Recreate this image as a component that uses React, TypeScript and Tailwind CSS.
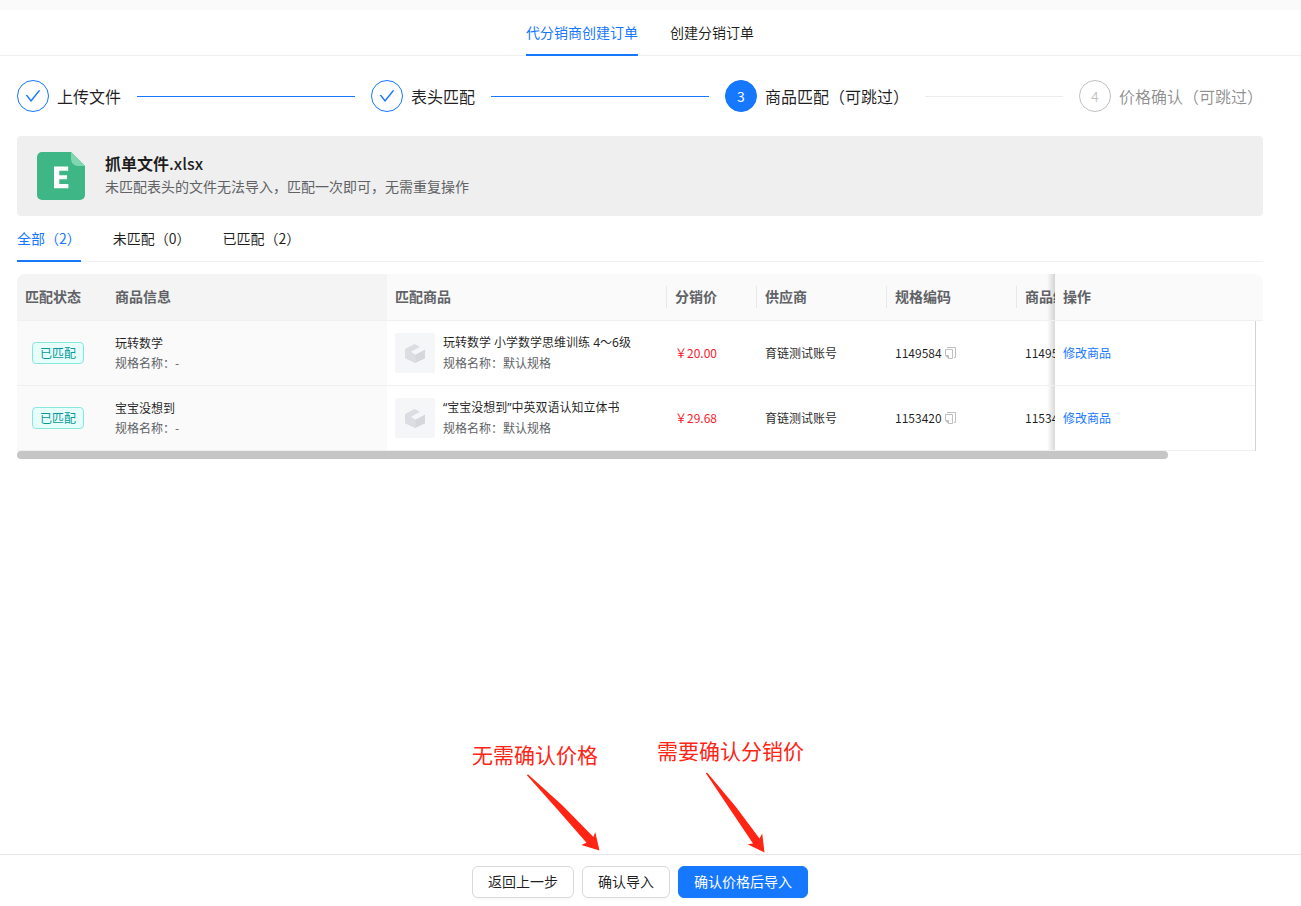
import React from 'react';

const FONT = "font-['Noto_Sans_CJK_SC',sans-serif]";

function CheckIcon() {
  return (
    <svg viewBox="64 64 896 896" className="size-4" fill="currentColor" aria-hidden="true">
      <path d="M912 190h-69.9c-9.8 0-19.1 4.5-25.1 12.2L404.7 724.5 207 474a32 32 0 00-25.1-12.2H112c-6.7 0-10.4 7.7-6.3 12.9l273.9 347c12.8 16.2 37.4 16.2 50.3 0l488.4-618.9c4.1-5.1.4-12.8-6.3-12.8z" />
    </svg>
  );
}

function FileIcon() {
  return (
    <svg viewBox="0 0 48 48" className="size-12 shrink-0" aria-hidden="true">
      <path d="M5 0H34L48 14V43a5 5 0 0 1-5 5H5a5 5 0 0 1-5-5V5a5 5 0 0 1 5-5Z" fill="#3eb686" />
      <path d="M34 0 48 14H41a7 7 0 0 1-7-7Z" fill="#7fd6b0" />
      <path d="M17 14.500H31.200V18.700H22.300V23.300H30V27.300H22.300V32H31.400V36.200H17Z" fill="#fff" />
    </svg>
  );
}

function BoxIcon() {
  return (
    <svg viewBox="0 0 20 19" className="h-[19px] w-5" aria-hidden="true">
      <path d="M0 5 9.500 0 15 2.700 6 7.800 10.500 10.800 20 5.800V14.200L10 19 0 14.200Z" fill="#dcdde2" />
      <path d="M10.500 10.800 20 5.800V14.200L10.500 18.800Z" fill="#d6d7dd" />
    </svg>
  );
}

function CopyIcon() {
  return (
    <svg viewBox="0 0 11 12" className="h-3 w-[11px]" fill="none" stroke="#c0c0c0" aria-hidden="true">
      <path d="M2 .5H10.500V10.500H9" />
      <path d="M.5 2.500H7.500V11.500H3.500L.5 8.500Z" />
      <path d="M.5 8.500H3.500V11.500Z" fill="#c0c0c0" />
    </svg>
  );
}

type StepState = 'done' | 'current' | 'wait';

const steps: { title: string; state: StepState }[] = [
  { title: '上传文件', state: 'done' },
  { title: '表头匹配', state: 'done' },
  { title: '商品匹配（可跳过）', state: 'current' },
  { title: '价格确认（可跳过）', state: 'wait' },
];

const circle: Record<StepState, string> = {
  done: 'border-[#1677ff] text-[#1677ff]',
  current: 'border-[#1677ff] bg-[#1677ff] text-white',
  wait: 'border-black/25 text-black/25',
};

function Steps() {
  return (
    <ol className="flex">
      {steps.map((s, i) => {
        const last = i === steps.length - 1;
        return (
          <li key={s.title} className={last ? 'flex items-center' : 'flex flex-1 items-center pr-4'}>
            <span className={`mr-2 flex size-8 shrink-0 items-center justify-center rounded-full border text-sm ${circle[s.state]}`}>
              {s.state === 'done' ? <CheckIcon /> : i + 1}
            </span>
            <span className={`text-base whitespace-nowrap ${s.state === 'wait' ? 'text-black/45' : 'text-black/88'}`}>{s.title}</span>
            {!last && <span className={`ml-4 h-px flex-1 ${s.state === 'done' ? 'bg-[#1677ff]' : 'bg-[#ececec]'}`} />}
          </li>
        );
      })}
    </ol>
  );
}

const rows = [
  { name: '玩转数学', product: '玩转数学 小学数学思维训练 4～6级', price: '￥20.00', sku: '1149584', code: '1149584' },
  { name: '宝宝没想到', product: '“宝宝没想到”中英双语认知立体书', price: '￥29.68', sku: '1153420', code: '1153420' },
];

const TD = 'h-[65px] border-b border-[#f0f0f0] px-2';
const TH = 'relative h-[47px] border-b border-[#f0f0f0] px-2 pb-0.5 text-left font-bold whitespace-nowrap';
const DIVIDER = "after:absolute after:top-3 after:right-0 after:h-[22px] after:w-px after:bg-[#e8e8e8] after:content-['']";
const SHADE =
  "before:absolute before:inset-y-0 before:-left-2 before:w-2 before:bg-linear-to-r before:from-transparent before:to-black/15 before:content-['']";

function ProductTable() {
  return (
    <div className="overflow-hidden rounded-t-lg">
      <table className="w-full min-w-[1338px] table-fixed border-separate border-spacing-0 text-xs text-black/88">
        <colgroup>
          <col className="w-[90px]" />
          <col className="w-[280px]" />
          <col className="w-[280px]" />
          <col className="w-[90px]" />
          <col className="w-[130px]" />
          <col className="w-[130px]" />
          <col className="w-[130px]" />
          <col className="w-[200px]" />
          <col className="w-2" />
        </colgroup>
        <thead className="text-sm text-[#606266]">
          <tr>
            <th className={`${TH} bg-[#f4f4f4]`}>匹配状态</th>
            <th className={`${TH} bg-[#f4f4f4]`}>商品信息</th>
            <th className={`${TH} ${DIVIDER} bg-[#fafafa]`}>匹配商品</th>
            <th className={`${TH} ${DIVIDER} bg-[#fafafa]`}>分销价</th>
            <th className={`${TH} ${DIVIDER} bg-[#fafafa]`}>供应商</th>
            <th className={`${TH} ${DIVIDER} bg-[#fafafa]`}>规格编码</th>
            <th className={`${TH} bg-[#fafafa]`}>商品编码</th>
            <th colSpan={2} className={`sticky right-0 h-[47px] border-b border-[#f0f0f0] bg-[#fafafa] px-2 pb-0.5 text-left font-bold ${SHADE}`}>
              操作
            </th>
          </tr>
        </thead>
        <tbody>
          {rows.map((r) => (
            <tr key={r.sku}>
              <td className={`${TD} bg-[#fafafa] text-center`}>
                <span className="mr-2 inline-block h-[22px] rounded border border-[#87e8de] bg-[#e6fffb] px-[7px] leading-5 text-[#08979c]">
                  已匹配
                </span>
              </td>
              <td className={`${TD} bg-[#fafafa] leading-5`}>
                <div>{r.name}</div>
                <div className="text-[#606266]">规格名称：-</div>
              </td>
              <td className={`${TD} leading-5`}>
                <div className="flex items-center gap-2">
                  <div className="flex size-10 shrink-0 items-center justify-center rounded-xs bg-[#f5f6f8]">
                    <BoxIcon />
                  </div>
                  <div>
                    <div className="font-['Noto_Sans','Noto_Sans_CJK_SC',sans-serif]">{r.product}</div>
                    <div className="text-[#606266]">规格名称：默认规格</div>
                  </div>
                </div>
              </td>
              <td className={`${TD} text-[#f5222d]`}>{r.price}</td>
              <td className={TD}>育链测试账号</td>
              <td className={TD}>
                <div className="flex items-center gap-[3px]">
                  {r.sku}
                  <button type="button" aria-label="复制">
                    <CopyIcon />
                  </button>
                </div>
              </td>
              <td className={TD}>{r.code}</td>
              <td className={`sticky right-2 h-[65px] border-b border-[#f0f0f0] bg-white px-2 ${SHADE}`}>
                <a href="#edit" className="text-[#1677ff]">
                  修改商品
                </a>
              </td>
              <td className="sticky right-0 border-l border-[#d3d3d3] bg-white p-0" />
            </tr>
          ))}
        </tbody>
      </table>
      <div className="mr-2 h-2">
        <div className="h-2 w-[93%] rounded-full bg-[#c6c6c6]" />
      </div>
    </div>
  );
}

const filters = ['全部（2）', '未匹配（0）', '已匹配（2）'];

const BTN = 'h-8 rounded-md border px-[15px] pb-0.5 text-sm whitespace-nowrap shadow-[0_2px_0_rgba(0,0,0,0.02)]';

export default function App() {
  return (
    <div className={`flex min-h-screen flex-col bg-white text-sm text-black/88 ${FONT}`}>
      <div className="h-[10px] bg-[#fafafa]" />
      <nav className="flex h-[46px] justify-center gap-8 border-b border-[#f0f0f0] pr-[21px]">
        <button type="button" className="-mb-px border-b-2 border-[#1677ff] text-[#1677ff]">
          代分销商创建订单
        </button>
        <button type="button" className="-mb-px border-b-2 border-transparent">
          创建分销订单
        </button>
      </nav>

      <main className="flex-1 pt-6 pr-[38px] pl-[17px]">
        <Steps />

        <section className="mt-6 flex h-20 gap-5 rounded bg-[#efefef] px-5 pt-4">
          <FileIcon />
          <div>
            <h1 className="text-base leading-[22px] font-bold">
              抓单文件<span className="font-medium">.xlsx</span>
            </h1>
            <p className="leading-6 text-[#606266]">未匹配表头的文件无法导入，匹配一次即可，无需重复操作</p>
          </div>
        </section>

        <div className="mb-3 flex h-[46px] gap-8 border-b border-[#f0f0f0]">
          {filters.map((f, i) => (
            <button
              key={f}
              type="button"
              className={`-mb-px border-b-2 ${i === 0 ? 'border-[#1677ff] text-[#1677ff]' : 'border-transparent'}`}
            >
              {f}
            </button>
          ))}
        </div>

        <ProductTable />
      </main>

      <footer className="flex h-[52px] justify-center border-t border-[#e8e8e8] pt-[11px] pr-[21px]">
        <div className="relative flex gap-2">
          <button type="button" className={`${BTN} h-8 border-[#d9d9d9] bg-white`}>
            返回上一步
          </button>
          <button type="button" className={`${BTN} border-[#d9d9d9] bg-white`}>
            确认导入
          </button>
          <button type="button" className={`${BTN} border-[#1677ff] bg-[#1677ff] text-white`}>
            确认价格后导入
          </button>
          <div className="pointer-events-none absolute bottom-full left-0 mb-3 h-[116px] w-[336px] text-[21px] leading-8 whitespace-nowrap text-[#ff2414]">
            <span className="absolute top-0 left-0">无需确认价格</span>
            <span className="absolute -top-1 left-[185px]">需要确认分销价</span>
            <svg viewBox="0 0 336 116" className="absolute inset-0 h-full w-full" fill="#ff2414" aria-hidden="true">
              <path d="M54.700 37 56.200 36.500 90 67 121.500 99 123.200 94 127.500 112.500 109.300 107 114.500 104.800 85 71Z" />
              <path d="M233.700 35 235.300 34.800 264 69 287.500 100.500 290.200 95.500 292.500 114.500 275.500 106.300 281 105.500 258.500 72Z" />
            </svg>
          </div>
        </div>
      </footer>
    </div>
  );
}
